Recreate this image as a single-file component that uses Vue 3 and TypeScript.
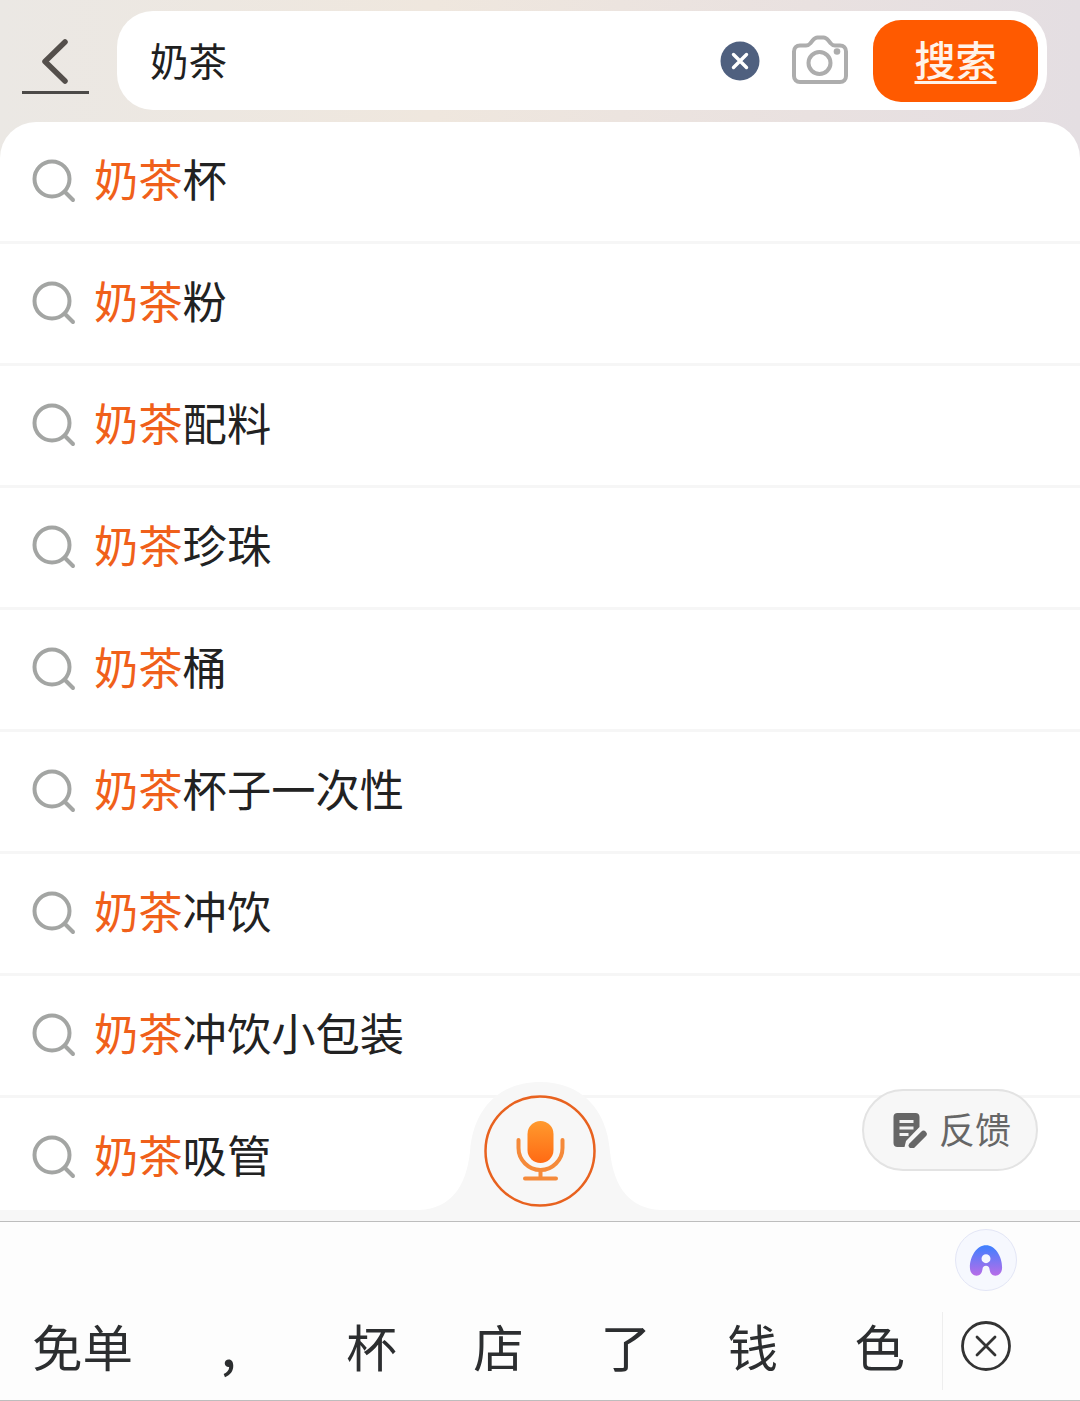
<script setup lang="ts">
const query = '奶茶'

const suggestions: string[] = [
  '杯',
  '粉',
  '配料',
  '珍珠',
  '桶',
  '杯子一次性',
  '冲饮',
  '冲饮小包装',
  '吸管',
]

const candidates: string[] = ['免单', ',', '杯', '店', '了', '钱', '色']
</script>

<template>
  <div class="page">
    <header class="top">
      <button class="back" title="返回">
        <svg width="67" height="56" viewBox="0 0 67 56">
          <path d="M43 3 23 22.5 43 42" fill="none" stroke="#544f4b" stroke-width="5.5" stroke-linecap="round" stroke-linejoin="round" />
          <rect x="0" y="52" width="67" height="3" fill="#4c4a48" />
        </svg>
      </button>
      <div class="search-box">
        <span class="query">{{ query }}</span>
        <svg class="clear" width="40" height="40" viewBox="0 0 40 40">
          <circle cx="20" cy="20" r="19.5" fill="#4f607f" />
          <path d="M13.5 13.5 26.5 26.5M26.5 13.5 13.5 26.5" stroke="#fff" stroke-width="3.4" stroke-linecap="round" />
        </svg>
        <svg class="camera" width="58" height="52" viewBox="0 0 58 52">
          <path d="M9 11.500h6c2 0 3.200-.8 4.400-2.200l2.400-3C23 4.800 24.500 3.500 26.500 3.500h6c2 0 3.500 1.300 4.700 2.800l2.400 3c1.200 1.400 2.400 2.200 4.400 2.200H49c3.600 0 6 2.400 6 6V42c0 3.600-2.400 6-6 6H9c-3.600 0-6-2.400-6-6V17.500c0-3.600 2.400-6 6-6Z" fill="none" stroke="#adadad" stroke-width="4" stroke-linejoin="round" />
          <circle cx="28.500" cy="29" r="11" fill="none" stroke="#adadad" stroke-width="4" />
          <circle cx="46" cy="17.500" r="3.300" fill="#adadad" />
        </svg>
        <button class="search-btn">搜索</button>
      </div>
    </header>

    <main class="list">
      <div v-for="item in suggestions" :key="item" class="row">
        <svg class="glass" width="44" height="44" viewBox="0 0 44 44">
          <circle cx="20" cy="20" r="17.500" fill="none" stroke="#a3a5a3" stroke-width="4" />
          <path d="M33 33 41 41" stroke="#a3a5a3" stroke-width="4" stroke-linecap="round" />
        </svg>
        <span class="row-text"><em>{{ query }}</em>{{ item }}</span>
      </div>

      <!-- voice button sits in a bump over the rows -->
      <div class="voice">
        <svg width="240" height="128" viewBox="0 0 240 128" class="voice-bump">
          <path d="M0 128C30 126 46 106 50 70 53 26 80 0 120 0s67 26 70 70c4 36 20 56 50 58Z" fill="#f7f7f7" />
        </svg>
        <svg width="112" height="112" viewBox="0 0 112 112" class="voice-mic">
          <defs>
            <linearGradient id="mic-fill" x1="0" y1="0" x2="0" y2="1">
              <stop offset="0" stop-color="#ff9a2e" />
              <stop offset="1" stop-color="#ff6a14" />
            </linearGradient>
          </defs>
          <circle cx="56" cy="56" r="54.500" fill="none" stroke="#e8621f" stroke-width="2.500" />
          <rect x="43.500" y="26" width="26" height="42" rx="13" fill="url(#mic-fill)" />
          <path d="M34.500 45v8c0 12 10 22 22 22s22-10 22-22v-8" fill="none" stroke="#f58a3a" stroke-width="4" stroke-linecap="round" />
          <path d="M56.500 75v8M41 83.500h31" stroke="#f58a3a" stroke-width="4" stroke-linecap="round" />
        </svg>
      </div>

      <button class="feedback">
        <svg width="34" height="36" viewBox="0 0 34 36">
          <path d="M4.500 1h18c2.500 0 4 1.500 4 4v10L13 29l-1.500 6h-7C2 35 .5 33.500 .5 31V5C.5 2.500 2 1 4.500 1Z" fill="#666" />
          <path d="M6.500 9.500h14M6.500 16h14M6.500 22.500h9" stroke="#f2f2f2" stroke-width="3" stroke-linecap="butt" />
          <path d="M19 33.500 30.500 22" stroke="#666" stroke-width="6.500" stroke-linecap="round" />
        </svg>
        <span>反馈</span>
      </button>
    </main>

    <div class="strip"></div>

    <footer class="keyboard">
      <div class="ai-badge">
        <svg width="34" height="35" viewBox="0 0 38 36">
          <defs>
            <linearGradient id="ai-fill" x1="0" y1="0" x2="0" y2="1">
              <stop offset="0" stop-color="#3d80ff" />
              <stop offset="1" stop-color="#b86de8" />
            </linearGradient>
          </defs>
          <path fill-rule="evenodd" d="M19 1C9 1 1 13 1 26c0 5 3 9 7.500 9 4 0 6-3 6.500-7 .3-2.500 1.500-4 4-4s3.700 1.500 4 4c.5 4 2.500 7 6.500 7C34 35 37 31 37 26 37 13 29 1 19 1Zm0 10a5 5 0 1 1 0 10 5 5 0 0 1 0-10Z" fill="url(#ai-fill)" />
        </svg>
      </div>
      <div class="candidates">
        <span v-for="word in candidates" :key="word" class="word" :class="{ comma: word === ',' }">{{ word }}</span>
      </div>
      <div class="kb-close">
        <svg width="50" height="50" viewBox="0 0 50 50">
          <circle cx="25" cy="25" r="23.500" fill="none" stroke="#333" stroke-width="2.800" />
          <path d="M16 16 34 34M34 16 16 34" stroke="#333" stroke-width="2.800" stroke-linecap="round" />
        </svg>
      </div>
    </footer>
  </div>
</template>

<style>
body {
  background: #fff;
}
</style>

<style scoped>
.page {
  position: relative;
  width: 1080px;
  height: 1401px;
  display: flex;
  flex-direction: column;
  overflow: hidden;
  font-family: "Noto Sans CJK SC", "Noto Sans", sans-serif;
  background: linear-gradient(90deg, #ebe8e4 0%, #efe7de 40%, #e9e1e0 75%, #e4dee2 100%);
}

.top {
  height: 122px;
  flex-shrink: 0;
  display: flex;
  padding: 11px 33px 12px 22px;
  box-sizing: border-box;
  gap: 28px;
}

.back {
  width: 67px;
  padding: 28px 0 0;
  border: none;
  background: transparent;
  align-self: flex-start;
  line-height: 0;
}

.search-box {
  flex: 1;
  height: 99px;
  display: flex;
  align-items: center;
  padding: 0 9px 0 33px;
  background: #fff;
  border-radius: 36px;
}

.query {
  flex: 1;
  font-size: 38.500px;
  color: #1f1f1f;
  line-height: 1;
  margin-top: -2px;
}

.clear {
  flex-shrink: 0;
  margin-right: 31px;
}

.camera {
  flex-shrink: 0;
  margin-right: 24px;
  margin-top: -1px;
}

.search-btn {
  width: 165px;
  height: 82px;
  padding: 0 0 5px;
  border: none;
  border-radius: 28px;
  background: #ff5a00;
  color: #fff3ea;
  font-family: inherit;
  font-size: 41px;
  font-weight: 500;
  text-decoration: underline;
  text-underline-offset: 5px;
  text-decoration-thickness: 3px;
}

.list {
  position: relative;
  height: 1088px;
  flex-shrink: 0;
  background: #fff;
  border-radius: 36px 36px 0 0;
  overflow: hidden;
}

.row {
  height: 122px;
  box-sizing: border-box;
  display: flex;
  align-items: center;
  gap: 18px;
  padding: 0 0 4px 32px;
  border-bottom: 3px solid #f6f6f6;
}

.row:last-of-type {
  border-bottom: none;
}

.glass {
  flex-shrink: 0;
  margin-top: 2px;
}

.row-text {
  font-size: 44.300px;
  line-height: 1;
  color: #222;
  margin-top: -2px;
}

.row-text em {
  font-style: normal;
  color: #f0601a;
}

.voice {
  position: absolute;
  left: 420px;
  top: 960px;
  width: 240px;
  height: 128px;
}

.voice-bump {
  display: block;
}

.voice-mic {
  position: absolute;
  left: 64px;
  top: 13px;
}

.feedback {
  position: absolute;
  left: 862px;
  top: 967px;
  width: 176px;
  height: 82px;
  box-sizing: border-box;
  display: flex;
  align-items: center;
  justify-content: center;
  gap: 12px;
  padding: 0 0 0 4px;
  border: 2.500px solid #e3e3e3;
  border-radius: 41px;
  background: #f7f7f7;
  color: #666;
  font-family: inherit;
  font-size: 36px;
}

.feedback span {
  margin-top: -5px;
}

.strip {
  height: 11px;
  flex-shrink: 0;
  background: #f7f7f7;
}

.keyboard {
  position: relative;
  height: 180px;
  flex-shrink: 0;
  box-sizing: border-box;
  border-top: 1px solid #bdbdbd;
  border-bottom: 1px solid #bdbdbd;
  background: #fdfdfd;
}

.ai-badge {
  position: absolute;
  left: 955px;
  top: 7px;
  width: 62px;
  height: 62px;
  box-sizing: border-box;
  display: flex;
  align-items: center;
  justify-content: center;
  border: 1.500px solid #e3e6f6;
  border-radius: 50%;
  background: #f6f8fe;
}

.candidates {
  position: absolute;
  left: 32px;
  top: 93px;
  display: flex;
  gap: 76.600px;
  font-size: 50.500px;
  line-height: 60px;
  color: #2c2e30;
}

.word.comma {
  width: 50px;
  margin-left: -6px;
  margin-right: 16px;
  text-align: center;
  font-weight: 500;
}

.kb-close {
  position: absolute;
  left: 942px;
  top: 90px;
  height: 78px;
  padding: 9px 0 0 18px;
  box-sizing: border-box;
  border-left: 1.500px solid #eeeeee;
}
</style>
